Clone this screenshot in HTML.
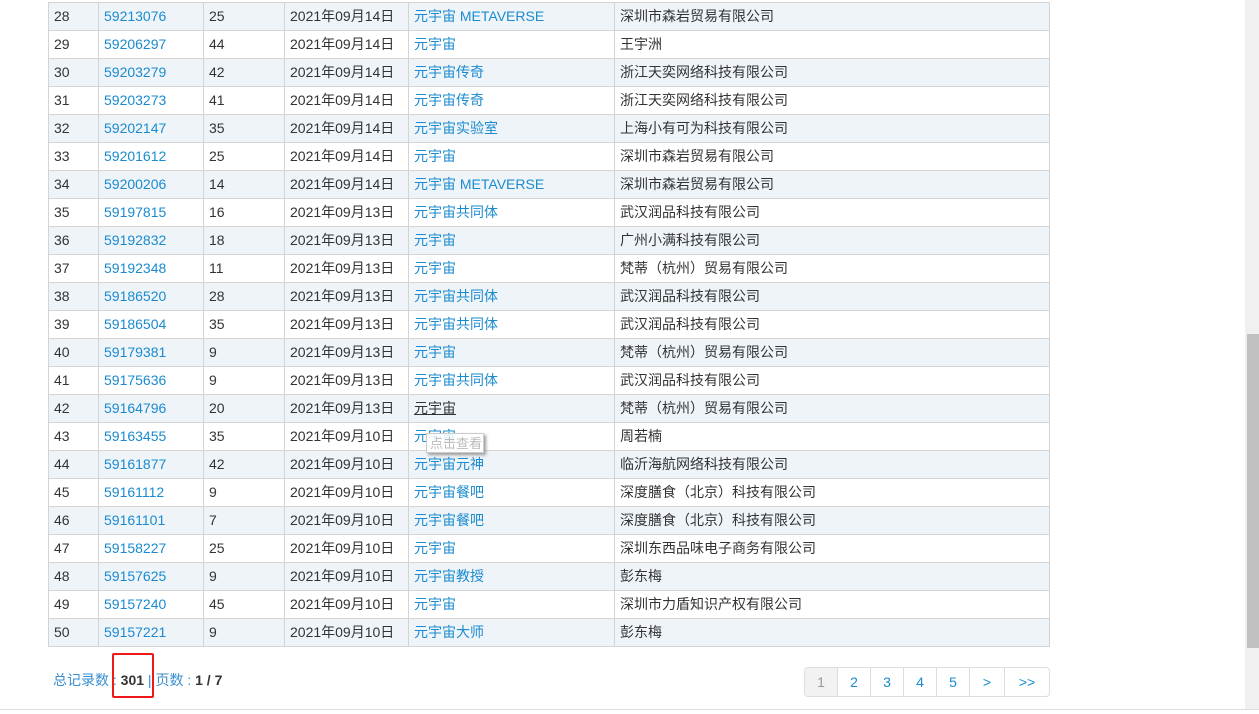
<!DOCTYPE html>
<html><head><meta charset="utf-8"><style>
body{margin:0;width:1259px;height:714px;overflow:hidden;background:#fff;font-family:"Liberation Sans","Noto Sans CJK SC",sans-serif;font-size:14px;color:#333;position:relative}
table{position:absolute;left:48px;top:2px;border-collapse:collapse;table-layout:fixed;width:1001px}
td{border:1px solid #d4d4d4;height:27px;padding:0 0 0 5px;line-height:27px;white-space:nowrap;overflow:hidden}
tr:nth-child(odd) td{background:#eff4f9}
a{color:#1a8bd0;text-decoration:none}
.sb{position:absolute;left:1245px;top:0;width:14px;height:709px;background:#f0f0f0}
.th{position:absolute;left:1247px;top:334px;width:12px;height:314px;background:#c1c1c1}
.bl{position:absolute;left:0;top:709px;width:1259px;height:1px;background:#ddd}
.tot{position:absolute;left:53px;top:670px;color:#3a8ed0;font-size:14px}
.tot b{color:#333}
.red{position:absolute;left:112px;top:653px;width:42px;height:45px;border:2px solid #f01818;border-radius:2px;box-sizing:border-box}
.pg{position:absolute;left:804px;top:667px;display:flex;border:1px solid #ddd;border-radius:4px;height:28px;overflow:hidden}
.pg span{width:32px;border-left:1px solid #ddd;text-align:center;line-height:28px;color:#1a8bd0}
.pg span:first-child{border-left:none;background:#f2f2f2;color:#999}
.tip{position:absolute;left:426px;top:433px;width:58px;height:20px;border:1px solid #ccc;background:rgba(255,255,255,.85);box-shadow:2px 2px 3px #999;font-size:13px;color:#bbb;line-height:20px;padding-left:3px;box-sizing:border-box;white-space:nowrap;overflow:hidden}
</style></head><body>
<table>
<colgroup><col style="width:50px"><col style="width:105px"><col style="width:81px"><col style="width:124px"><col style="width:206px"><col style="width:435px"></colgroup>
<tr><td>28</td><td><a>59213076</a></td><td>25</td><td>2021年09月14日</td><td><a>元宇宙 METAVERSE</a></td><td>深圳市森岩贸易有限公司</td></tr>
<tr><td>29</td><td><a>59206297</a></td><td>44</td><td>2021年09月14日</td><td><a>元宇宙</a></td><td>王宇洲</td></tr>
<tr><td>30</td><td><a>59203279</a></td><td>42</td><td>2021年09月14日</td><td><a>元宇宙传奇</a></td><td>浙江天奕网络科技有限公司</td></tr>
<tr><td>31</td><td><a>59203273</a></td><td>41</td><td>2021年09月14日</td><td><a>元宇宙传奇</a></td><td>浙江天奕网络科技有限公司</td></tr>
<tr><td>32</td><td><a>59202147</a></td><td>35</td><td>2021年09月14日</td><td><a>元宇宙实验室</a></td><td>上海小有可为科技有限公司</td></tr>
<tr><td>33</td><td><a>59201612</a></td><td>25</td><td>2021年09月14日</td><td><a>元宇宙</a></td><td>深圳市森岩贸易有限公司</td></tr>
<tr><td>34</td><td><a>59200206</a></td><td>14</td><td>2021年09月14日</td><td><a>元宇宙 METAVERSE</a></td><td>深圳市森岩贸易有限公司</td></tr>
<tr><td>35</td><td><a>59197815</a></td><td>16</td><td>2021年09月13日</td><td><a>元宇宙共同体</a></td><td>武汉润品科技有限公司</td></tr>
<tr><td>36</td><td><a>59192832</a></td><td>18</td><td>2021年09月13日</td><td><a>元宇宙</a></td><td>广州小满科技有限公司</td></tr>
<tr><td>37</td><td><a>59192348</a></td><td>11</td><td>2021年09月13日</td><td><a>元宇宙</a></td><td>梵蒂（杭州）贸易有限公司</td></tr>
<tr><td>38</td><td><a>59186520</a></td><td>28</td><td>2021年09月13日</td><td><a>元宇宙共同体</a></td><td>武汉润品科技有限公司</td></tr>
<tr><td>39</td><td><a>59186504</a></td><td>35</td><td>2021年09月13日</td><td><a>元宇宙共同体</a></td><td>武汉润品科技有限公司</td></tr>
<tr><td>40</td><td><a>59179381</a></td><td>9</td><td>2021年09月13日</td><td><a>元宇宙</a></td><td>梵蒂（杭州）贸易有限公司</td></tr>
<tr><td>41</td><td><a>59175636</a></td><td>9</td><td>2021年09月13日</td><td><a>元宇宙共同体</a></td><td>武汉润品科技有限公司</td></tr>
<tr><td>42</td><td><a>59164796</a></td><td>20</td><td>2021年09月13日</td><td><a style="color:#333;text-decoration:underline">元宇宙</a></td><td>梵蒂（杭州）贸易有限公司</td></tr>
<tr><td>43</td><td><a>59163455</a></td><td>35</td><td>2021年09月10日</td><td><a>元宇宙</a></td><td>周若楠</td></tr>
<tr><td>44</td><td><a>59161877</a></td><td>42</td><td>2021年09月10日</td><td><a>元宇宙元神</a></td><td>临沂海航网络科技有限公司</td></tr>
<tr><td>45</td><td><a>59161112</a></td><td>9</td><td>2021年09月10日</td><td><a>元宇宙餐吧</a></td><td>深度膳食（北京）科技有限公司</td></tr>
<tr><td>46</td><td><a>59161101</a></td><td>7</td><td>2021年09月10日</td><td><a>元宇宙餐吧</a></td><td>深度膳食（北京）科技有限公司</td></tr>
<tr><td>47</td><td><a>59158227</a></td><td>25</td><td>2021年09月10日</td><td><a>元宇宙</a></td><td>深圳东西品味电子商务有限公司</td></tr>
<tr><td>48</td><td><a>59157625</a></td><td>9</td><td>2021年09月10日</td><td><a>元宇宙教授</a></td><td>彭东梅</td></tr>
<tr><td>49</td><td><a>59157240</a></td><td>45</td><td>2021年09月10日</td><td><a>元宇宙</a></td><td>深圳市力盾知识产权有限公司</td></tr>
<tr><td>50</td><td><a>59157221</a></td><td>9</td><td>2021年09月10日</td><td><a>元宇宙大师</a></td><td>彭东梅</td></tr>
</table>
<div class="tip">点击查看</div>
<div class="tot">总记录数 : <b>301</b> | 页数 : <b>1 / 7</b></div>
<div class="red"></div>
<div class="pg"><span>1</span><span>2</span><span>3</span><span>4</span><span>5</span><span style="width:34px">&gt;</span><span style="width:44px">&gt;&gt;</span></div>
<div class="sb"></div><div class="th"></div>
<div class="bl"></div>
</body></html>
